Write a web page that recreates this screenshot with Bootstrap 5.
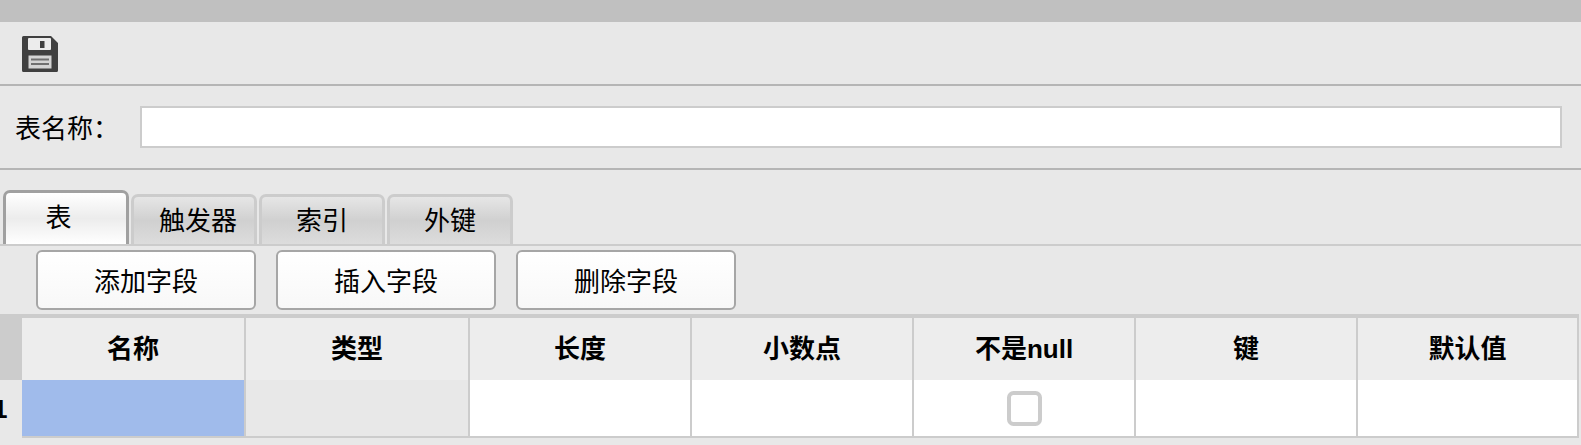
<!DOCTYPE html>
<html lang="zh-CN">
<head>
    <meta charset="UTF-8">
    <meta name="viewport" content="width=device-width, initial-scale=1.0">
    <title>表设计</title>
    <link rel="stylesheet" href="https://cdn.jsdelivr.net/npm/bootstrap@5.3.0/dist/css/bootstrap.min.css">
    <style>
        body {
            background-color: #e8e8e8;
            color: #000;
            font-family: "Liberation Sans", "Noto Sans CJK SC", sans-serif;
            font-size: 26px;
            overflow: hidden;
        }
        .top-strip {
            height: 22px;
            background-color: #c0c0c0;
        }
        .tool-strip {
            height: 64px;
            padding: 2px 0 0 22px;
            border-bottom: 2px solid #b5b5b5;
        }
        .name-strip {
            height: 84px;
            padding: 0 19px 0 15px;
            border-bottom: 2px solid #b5b5b5;
        }
        .name-label {
            width: 125px;
            flex: none;
            padding-top: 4px;
        }
        .name-input {
            height: 42px;
            border: 2px solid #ccc;
            border-radius: 0;
            background-color: #fff;
        }
        .tab-strip {
            height: 76px;
            padding: 20px 0 0 3px;
            gap: 2px;
            border-bottom: 2px solid #ccc;
            align-items: flex-end;
        }
        .tab-item {
            width: 126px;
            height: 50px;
            padding: 0;
            color: #000;
            line-height: 48px;
            text-align: center;
            border: 3px solid #ccc;
            border-bottom: 0;
            border-radius: 7px 7px 0 0;
            background: linear-gradient(#e6e6e6, #d0d0d0 50%, #dcdcdc);
        }
        .tab-item:hover {
            color: #000;
        }
        .tab-item.is-on {
            height: 54px;
            padding-right: 15px;
            line-height: 50px;
            border-color: #a0a0a0;
            background: linear-gradient(#fff, #ececec 50%, #fff);
        }
        .tab-shift {
            padding-left: 8px;
        }
        .btn-strip {
            height: 68px;
            padding: 4px 0 0 36px;
            gap: 20px;
        }
        .field-btn {
            width: 220px;
            height: 60px;
            padding: 4px 0 0;
            color: #000;
            font-size: 26px;
            border: 2px solid #a6a6a6;
            border-radius: 6px;
            background: linear-gradient(#fff, #f8f8f8);
        }
        .field-table {
            width: 1579px;
            table-layout: fixed;
            border-collapse: separate;
            border-spacing: 0;
        }
        .field-table th {
            width: 222px;
            height: 66px;
            padding: 0;
            text-align: center;
            font-weight: 700;
            background-color: #ededed;
            border-top: 4px solid #ccc;
            border-right: 2px solid #ccc;
        }
        .field-table th.corner-cell {
            width: 22px;
            background-color: #ccc;
            border-right: 0;
        }
        .field-table th.col-wide {
            width: 224px;
        }
        .field-table th.col-last {
            width: 221px;
        }
        .field-table td {
            height: 58px;
            padding: 0;
            text-align: center;
            vertical-align: middle;
            background-color: #fff;
            border-right: 2px solid #ccc;
            border-bottom: 2px solid #ccc;
        }
        .field-table td.row-num {
            overflow: hidden;
            font-weight: 700;
            text-align: left;
            text-indent: -7px;
            background-color: transparent;
            border: 0;
        }
        .field-table td.cell-sel {
            background-color: #a0bbeb;
        }
        .field-table td.cell-off {
            background-color: #e8e8e8;
        }
        .null-check {
            display: block;
            width: 35px;
            height: 35px;
            margin: 0 auto;
            border: 4px solid #ccc;
            border-radius: 2px;
        }
    </style>
</head>
<body>
    <div class="top-strip"></div>

    <div class="tool-strip d-flex align-items-center">
        <svg width="36" height="36" viewBox="0 0 36 36" aria-label="保存">
            <path fill="#404040" d="M1.500 0H29l7 7v27.500a1.500 1.500 0 0 1-1.500 1.500h-33A1.500 1.500 0 0 1 0 34.500v-33A1.500 1.500 0 0 1 1.500 0z"/>
            <rect x="6" y="2" width="23" height="12" rx="1" fill="#ececec"/>
            <rect x="18" y="5" width="4.500" height="7" fill="#404040"/>
            <rect x="6.500" y="19.500" width="23" height="13" fill="#d4d4d4"/>
            <rect x="9" y="22.500" width="18" height="2" fill="#707070"/>
            <rect x="9" y="27" width="18" height="2" fill="#707070"/>
        </svg>
    </div>

    <div class="name-strip d-flex align-items-center">
        <label class="name-label" for="table-name">表名称：</label>
        <input type="text" class="form-control name-input" id="table-name">
    </div>

    <ul class="nav tab-strip">
        <li><a class="nav-link tab-item is-on" href="#">表</a></li>
        <li><a class="nav-link tab-item tab-shift" href="#">触发器</a></li>
        <li><a class="nav-link tab-item" href="#">索引</a></li>
        <li><a class="nav-link tab-item" href="#">外键</a></li>
    </ul>

    <div class="btn-strip d-flex align-items-start">
        <button type="button" class="btn field-btn">添加字段</button>
        <button type="button" class="btn field-btn">插入字段</button>
        <button type="button" class="btn field-btn">删除字段</button>
    </div>

    <table class="field-table">
        <thead>
            <tr>
                <th class="corner-cell"></th>
                <th class="col-wide">名称</th>
                <th class="col-wide">类型</th>
                <th>长度</th>
                <th>小数点</th>
                <th>不是null</th>
                <th>键</th>
                <th class="col-last">默认值</th>
            </tr>
        </thead>
        <tbody>
            <tr>
                <td class="row-num">1</td>
                <td class="cell-sel"></td>
                <td class="cell-off"></td>
                <td></td>
                <td></td>
                <td><input class="form-check-input null-check" type="checkbox" aria-label="不是null"></td>
                <td></td>
                <td></td>
            </tr>
        </tbody>
    </table>

    <script src="https://cdn.jsdelivr.net/npm/bootstrap@5.3.0/dist/js/bootstrap.bundle.min.js"></script>
</body>
</html>
